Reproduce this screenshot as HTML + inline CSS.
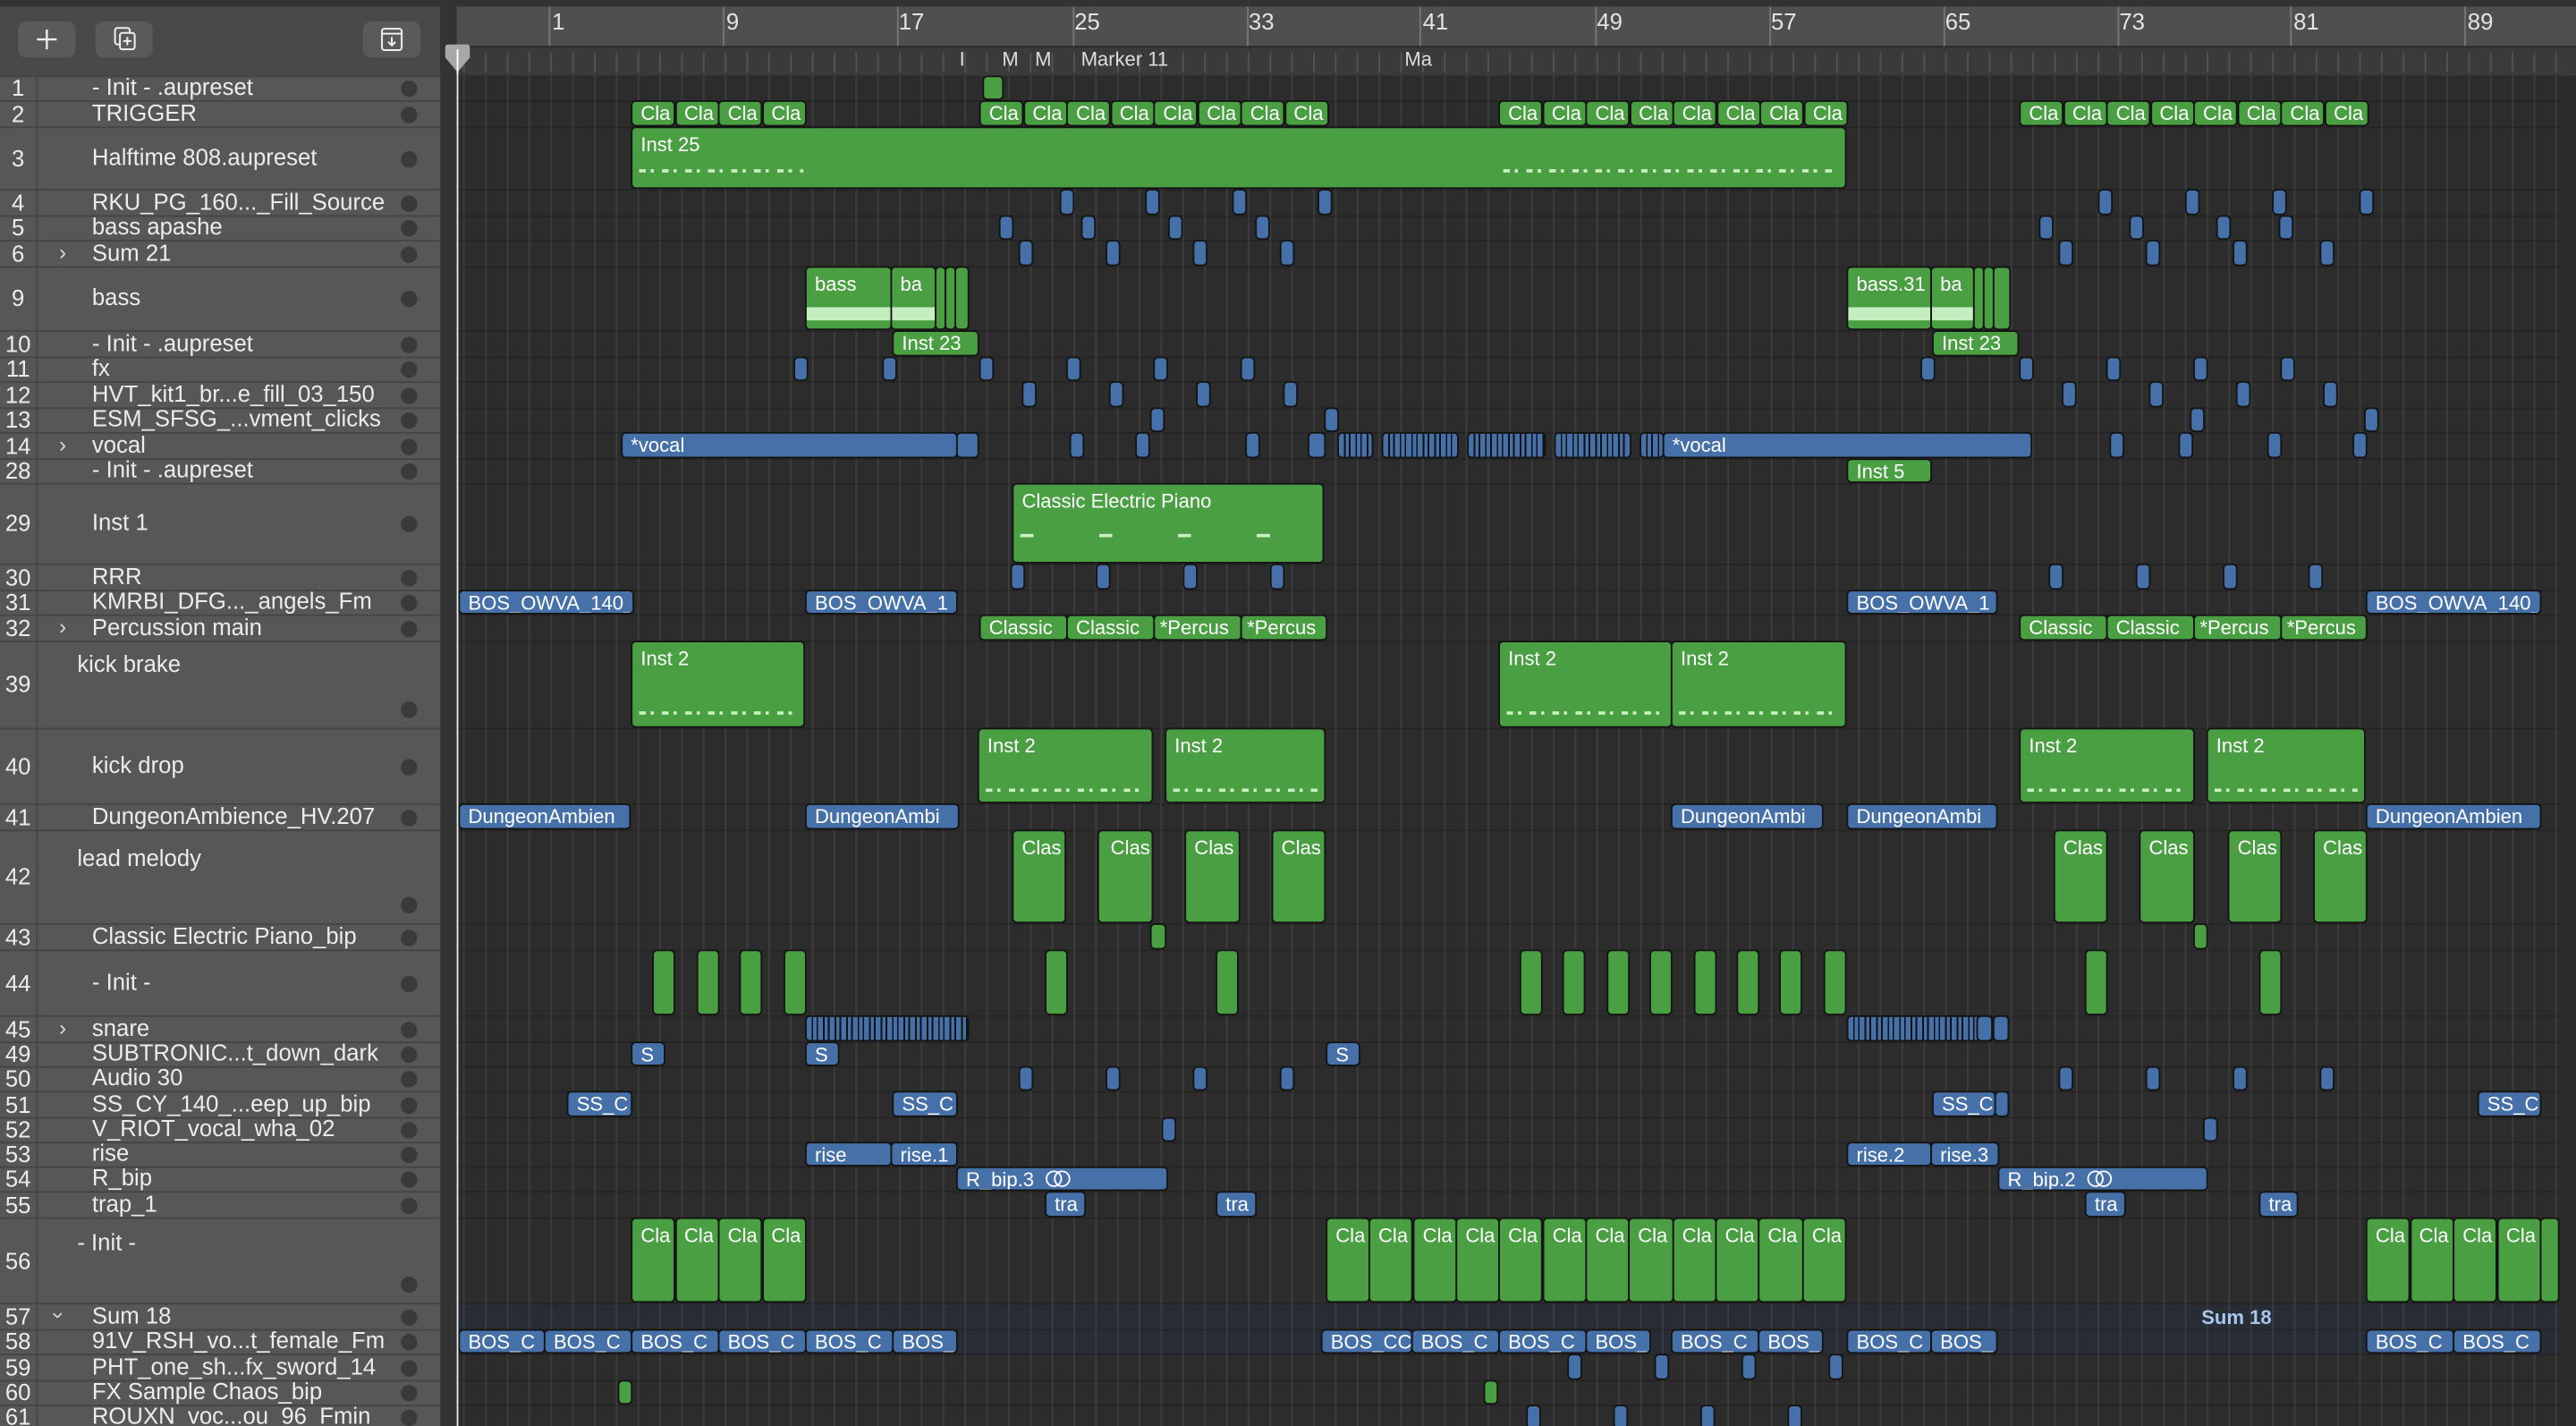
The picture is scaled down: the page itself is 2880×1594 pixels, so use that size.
<!DOCTYPE html>
<html><head><meta charset="utf-8"><style>
html,body{margin:0;padding:0;background:#2c2c2c;overflow:hidden}
#s{position:relative;width:1568px;height:868px;transform:scale(1.83673,1.83641);transform-origin:0 0;overflow:hidden;font-family:"Liberation Sans",sans-serif;background:#2c2c2c}
.a{position:absolute}
#lp{position:absolute;left:0;top:46px;width:268px;height:822px;background:#454545}
.lr{position:absolute;left:0;width:268px;background:#575757;border-top:1px solid #454545;box-sizing:border-box;color:#ececec;font-size:14px}
.lr .n{position:absolute;left:0;width:22px;text-align:center;top:50%;transform:translateY(-55%);font-size:14px;line-height:1}
.lr .t{position:absolute;left:56px;top:50%;transform:translateY(-60%);white-space:nowrap;line-height:1;z-index:3}
.lr .t2{position:absolute;left:47px;top:5px;white-space:nowrap}
.lr .d{position:absolute;left:244px;top:50%;margin-top:-5px;width:10px;height:10px;border-radius:50%;background:#3a3a3a}
.lr .d2{position:absolute;left:244px;bottom:6px;width:10px;height:10px;border-radius:50%;background:#3a3a3a}
.lr .c{position:absolute;left:36px;top:50%;transform:translateY(-62%);font-size:13px;color:#ddd;line-height:1}
#nsep{position:absolute;left:22px;top:46px;width:1px;height:822px;background:#454545}
.tr{position:absolute;left:278px;width:1280px;border-top:1px solid #242424;box-sizing:border-box}
#grid{position:absolute;left:278px;top:46px;width:1280px;height:822px;background-image:linear-gradient(90deg,rgba(255,255,255,.075) 0,rgba(255,255,255,.075) 1px,transparent 1px);background-size:13.27px 100%;background-position:3.9px 0}
.x{position:absolute;box-sizing:border-box;border:1px solid #141414;border-radius:3px;color:#fff;font-size:12px;line-height:14px;padding-left:5px;white-space:nowrap;overflow:hidden}
.g{background:#4a9f43}.b{background:#4670a8}
.st{background:repeating-linear-gradient(90deg,#4670a8 0 3px,#111 3px 4px,#4670a8 4px 6px,#111 6px 7px)}
.w{position:absolute;left:4px;right:4px;height:2px;background:repeating-linear-gradient(90deg,#c9efc2 0 4px,transparent 4px 7px,#c9efc2 7px 9px,transparent 9px 14px)}
.r1{top:46px;height:15px}.r2{top:61px;height:16px}.r3{top:77px;height:38px}.r4{top:115px;height:16px}.r5{top:131px;height:15px}.r6{top:146px;height:16px}.r9{top:162px;height:39px}.r10{top:201px;height:16px}.r11{top:217px;height:15px}.r12{top:232px;height:16px}.r13{top:248px;height:15px}.r14{top:263px;height:16px}.r28{top:279px;height:15px}.r29{top:294px;height:49px}.r30{top:343px;height:16px}.r31{top:359px;height:15px}.r32{top:374px;height:16px}.r39{top:390px;height:53px}.r40{top:443px;height:46px}.r41{top:489px;height:16px}.r42{top:505px;height:57px}.r43{top:562px;height:16px}.r44{top:578px;height:40px}.r45{top:618px;height:16px}.r49{top:634px;height:15px}.r50{top:649px;height:15px}.r51{top:664px;height:16px}.r52{top:680px;height:15px}.r53{top:695px;height:15px}.r54{top:710px;height:15px}.r55{top:725px;height:16px}.r56{top:741px;height:52px}.r57{top:793px;height:16px}.r58{top:809px;height:15px}.r59{top:824px;height:16px}.r60{top:840px;height:15px}.r61{top:855px;height:15px}
.s8{width:9px}.s14{width:14px}
.rn{position:absolute;top:5px;color:#e4e4e4;font-size:14px}
.rt{position:absolute;top:4px;width:1px;height:24px;background:#777}
.mk{position:absolute;top:29px;color:#ddd;font-size:12px}
.btn{position:absolute;top:13px;width:35px;height:22px;background:#5a5a5a;border-radius:5px}
</style></head><body><div id="s">
<div class="a" style="left:0;top:0;width:1568px;height:4px;background:#333"></div>
<div class="a" style="left:0;top:4px;width:268px;height:42px;background:#494949"></div>
<div class="a" style="left:268px;top:0;width:10px;height:868px;background:#333"></div>
<div class="btn" style="left:11px"><svg width="35" height="22" viewBox="0 0 35 22"><path d="M17.5 5v12M11.5 11h12" stroke="#eee" stroke-width="1.3"/></svg></div>
<div class="btn" style="left:58px"><svg width="35" height="22" viewBox="0 0 35 22"><rect x="12" y="4" width="9" height="10" rx="1.5" fill="none" stroke="#eee" stroke-width="1.1"/><rect x="15" y="7" width="9" height="10" rx="1.5" fill="#5a5a5a" stroke="#eee" stroke-width="1.1"/><path d="M19.5 9.5v5M17 12h5" stroke="#eee" stroke-width="1.1"/></svg></div>
<div class="btn" style="left:221px"><svg width="35" height="22" viewBox="0 0 35 22"><rect x="11.5" y="4.5" width="12" height="13" rx="1.5" fill="none" stroke="#eee" stroke-width="1.1"/><path d="M11.5 7.5h12M17.5 9.5v5M15.3 12.5l2.2 2.2 2.2-2.2" fill="none" stroke="#eee" stroke-width="1.1"/></svg></div>
<div class="a" style="left:278px;top:4px;width:1290px;height:24px;background:#4f4f4f"></div>
<div class="a" style="left:278px;top:28px;width:1290px;height:18px;background:#3a3a3a;border-top:1px solid #2a2a2a;box-sizing:border-box;background-image:linear-gradient(90deg,rgba(255,255,255,.12) 0,rgba(255,255,255,.12) 1px,transparent 1px);background-size:13.27px 12px;background-position:3.9px 3px;background-repeat:repeat-x"></div>
<div class="rt" style="left:334px"></div><div class="rn" style="left:336px">1</div>
<div class="rt" style="left:440px"></div><div class="rn" style="left:442px">9</div>
<div class="rt" style="left:546px"></div><div class="rn" style="left:547px">17</div>
<div class="rt" style="left:653px"></div><div class="rn" style="left:654px">25</div>
<div class="rt" style="left:759px"></div><div class="rn" style="left:760px">33</div>
<div class="rt" style="left:864px"></div><div class="rn" style="left:866px">41</div>
<div class="rt" style="left:971px"></div><div class="rn" style="left:972px">49</div>
<div class="rt" style="left:1077px"></div><div class="rn" style="left:1078px">57</div>
<div class="rt" style="left:1183px"></div><div class="rn" style="left:1184px">65</div>
<div class="rt" style="left:1289px"></div><div class="rn" style="left:1290px">73</div>
<div class="rt" style="left:1394px"></div><div class="rn" style="left:1396px">81</div>
<div class="rt" style="left:1500px"></div><div class="rn" style="left:1502px">89</div>
<div class="mk" style="left:584px">I</div><div class="mk" style="left:610px">M</div><div class="mk" style="left:630px">M</div><div class="mk" style="left:658px">Marker 11</div><div class="mk" style="left:855px">Ma</div>
<div id="lp"></div>
<div class="lr r1"><span class="n">1</span><span class="t">- Init - .aupreset</span><i class="d"></i></div>
<div class="lr r2"><span class="n">2</span><span class="t">TRIGGER</span><i class="d"></i></div>
<div class="lr r3"><span class="n">3</span><span class="t">Halftime 808.aupreset</span><i class="d"></i></div>
<div class="lr r4"><span class="n">4</span><span class="t">RKU_PG_160..._Fill_Source</span><i class="d"></i></div>
<div class="lr r5"><span class="n">5</span><span class="t">bass apashe</span><i class="d"></i></div>
<div class="lr r6"><span class="n">6</span><span class="c">&#x203A;</span><span class="t">Sum 21</span><i class="d"></i></div>
<div class="lr r9"><span class="n">9</span><span class="t">bass</span><i class="d"></i></div>
<div class="lr r10"><span class="n">10</span><span class="t">- Init - .aupreset</span><i class="d"></i></div>
<div class="lr r11"><span class="n">11</span><span class="t">fx</span><i class="d"></i></div>
<div class="lr r12"><span class="n">12</span><span class="t">HVT_kit1_br...e_fill_03_150</span><i class="d"></i></div>
<div class="lr r13"><span class="n">13</span><span class="t">ESM_SFSG_...vment_clicks</span><i class="d"></i></div>
<div class="lr r14"><span class="n">14</span><span class="c">&#x203A;</span><span class="t">vocal</span><i class="d"></i></div>
<div class="lr r28"><span class="n">28</span><span class="t">- Init - .aupreset</span><i class="d"></i></div>
<div class="lr r29"><span class="n">29</span><span class="t">Inst 1</span><i class="d"></i></div>
<div class="lr r30"><span class="n">30</span><span class="t">RRR</span><i class="d"></i></div>
<div class="lr r31"><span class="n">31</span><span class="t">KMRBI_DFG..._angels_Fm</span><i class="d"></i></div>
<div class="lr r32"><span class="n">32</span><span class="c">&#x203A;</span><span class="t">Percussion main</span><i class="d"></i></div>
<div class="lr r39"><span class="n">39</span><span class="t2">kick brake</span><i class="d2"></i></div>
<div class="lr r40"><span class="n">40</span><span class="t">kick drop</span><i class="d"></i></div>
<div class="lr r41"><span class="n">41</span><span class="t">DungeonAmbience_HV.207</span><i class="d"></i></div>
<div class="lr r42"><span class="n">42</span><span class="t2" style="top:8px">lead melody</span><i class="d2"></i></div>
<div class="lr r43"><span class="n">43</span><span class="t">Classic Electric Piano_bip</span><i class="d"></i></div>
<div class="lr r44"><span class="n">44</span><span class="t">- Init -</span><i class="d"></i></div>
<div class="lr r45"><span class="n">45</span><span class="c">&#x203A;</span><span class="t">snare</span><i class="d"></i></div>
<div class="lr r49"><span class="n">49</span><span class="t">SUBTRONIC...t_down_dark</span><i class="d"></i></div>
<div class="lr r50"><span class="n">50</span><span class="t">Audio 30</span><i class="d"></i></div>
<div class="lr r51"><span class="n">51</span><span class="t">SS_CY_140_...eep_up_bip</span><i class="d"></i></div>
<div class="lr r52"><span class="n">52</span><span class="t">V_RIOT_vocal_wha_02</span><i class="d"></i></div>
<div class="lr r53"><span class="n">53</span><span class="t">rise</span><i class="d"></i></div>
<div class="lr r54"><span class="n">54</span><span class="t">R_bip</span><i class="d"></i></div>
<div class="lr r55"><span class="n">55</span><span class="t">trap_1</span><i class="d"></i></div>
<div class="lr r56"><span class="n">56</span><span class="t2" style="top:6px">- Init -</span><i class="d2"></i></div>
<div class="lr r57"><span class="n">57</span><span class="c" style="left:34px;transform:translateY(-60%) rotate(90deg)">&#x203A;</span><span class="t">Sum 18</span><i class="d"></i></div>
<div class="lr r58"><span class="n">58</span><span class="t">91V_RSH_vo...t_female_Fm</span><i class="d"></i></div>
<div class="lr r59"><span class="n">59</span><span class="t">PHT_one_sh...fx_sword_14</span><i class="d"></i></div>
<div class="lr r60"><span class="n">60</span><span class="t">FX Sample Chaos_bip</span><i class="d"></i></div>
<div class="lr r61"><span class="n">61</span><span class="t">ROUXN_voc...ou_96_Fmin</span><i class="d"></i></div>
<div id="nsep"></div>
<div class="tr r2"></div><div class="tr r3"></div><div class="tr r4"></div><div class="tr r5"></div><div class="tr r6"></div><div class="tr r9"></div><div class="tr r10"></div><div class="tr r11"></div><div class="tr r12"></div><div class="tr r13"></div><div class="tr r14"></div><div class="tr r28"></div><div class="tr r29"></div><div class="tr r30"></div><div class="tr r31"></div><div class="tr r32"></div><div class="tr r39"></div><div class="tr r40"></div><div class="tr r41"></div><div class="tr r42"></div><div class="tr r43"></div><div class="tr r44"></div><div class="tr r45"></div><div class="tr r49"></div><div class="tr r50"></div><div class="tr r51"></div><div class="tr r52"></div><div class="tr r53"></div><div class="tr r54"></div><div class="tr r55"></div><div class="tr r56"></div>
<div class="tr r57" style="background:#272c35"></div><div class="tr r58" style="background:#272c35"></div><div class="tr r59"></div><div class="tr r60"></div><div class="tr r61"></div>
<div id="grid"></div>
<div class="a" style="left:1558px;top:46px;width:10px;height:822px;background:#2a2a2a"></div>
<div class="a" style="left:1340px;top:795px;color:#a9c6ee;font-size:12px;font-weight:bold">Sum 18</div>
<div class="x g r1" style="left:598px;width:13px"></div>
<div class="x g r2" style="left:384px;width:27px">Cla</div><div class="x g r2" style="left:410.5px;width:27px">Cla</div><div class="x g r2" style="left:437px;width:27px">Cla</div><div class="x g r2" style="left:463.5px;width:27px">Cla</div>
<div class="x g r2" style="left:596px;width:27px">Cla</div><div class="x g r2" style="left:622.5px;width:27px">Cla</div><div class="x g r2" style="left:649px;width:27px">Cla</div><div class="x g r2" style="left:675.5px;width:27px">Cla</div><div class="x g r2" style="left:702px;width:27px">Cla</div><div class="x g r2" style="left:728.5px;width:27px">Cla</div><div class="x g r2" style="left:755px;width:27px">Cla</div><div class="x g r2" style="left:781.5px;width:27px">Cla</div>
<div class="x g r2" style="left:912px;width:27px">Cla</div><div class="x g r2" style="left:938.5px;width:27px">Cla</div><div class="x g r2" style="left:965px;width:27px">Cla</div><div class="x g r2" style="left:991.5px;width:27px">Cla</div><div class="x g r2" style="left:1018px;width:27px">Cla</div><div class="x g r2" style="left:1044.5px;width:27px">Cla</div><div class="x g r2" style="left:1071px;width:27px">Cla</div><div class="x g r2" style="left:1097.5px;width:27px">Cla</div>
<div class="x g r2" style="left:1229px;width:27px">Cla</div><div class="x g r2" style="left:1255.5px;width:27px">Cla</div><div class="x g r2" style="left:1282px;width:27px">Cla</div><div class="x g r2" style="left:1308.5px;width:27px">Cla</div><div class="x g r2" style="left:1335px;width:27px">Cla</div><div class="x g r2" style="left:1361.5px;width:27px">Cla</div><div class="x g r2" style="left:1388px;width:27px">Cla</div><div class="x g r2" style="left:1414.5px;width:27px">Cla</div>
<div class="x g r3" style="left:384px;width:740px;padding-top:3px">Inst 25<div class="w" style="top:25px;width:100px"></div><div class="w" style="top:25px;left:530px;width:200px"></div></div>
<div class="x b r4 s8" style="left:645px"></div><div class="x b r4 s8" style="left:697px"></div><div class="x b r4 s8" style="left:750px"></div><div class="x b r4 s8" style="left:802px"></div><div class="x b r4 s8" style="left:1277px"></div><div class="x b r4 s8" style="left:1330px"></div><div class="x b r4 s8" style="left:1383px"></div><div class="x b r4 s8" style="left:1436px"></div>
<div class="x b r5 s8" style="left:608px"></div><div class="x b r5 s8" style="left:658px"></div><div class="x b r5 s8" style="left:711px"></div><div class="x b r5 s8" style="left:764px"></div><div class="x b r5 s8" style="left:1241px"></div><div class="x b r5 s8" style="left:1296px"></div><div class="x b r5 s8" style="left:1349px"></div><div class="x b r5 s8" style="left:1387px"></div>
<div class="x b r6 s8" style="left:620px"></div><div class="x b r6 s8" style="left:673px"></div><div class="x b r6 s8" style="left:726px"></div><div class="x b r6 s8" style="left:779px"></div><div class="x b r6 s8" style="left:1253px"></div><div class="x b r6 s8" style="left:1306px"></div><div class="x b r6 s8" style="left:1359px"></div><div class="x b r6 s8" style="left:1412px"></div>
<div class="x g r9" style="left:490px;width:53px;padding-top:3px">bass<div class="w" style="top:24px;left:0;right:0;height:8px;background:#c4eec0"></div></div>
<div class="x g r9" style="left:542px;width:28px;padding-top:3px">ba<div class="w" style="top:24px;left:0;right:0;height:8px;background:#c4eec0"></div></div>
<div class="x g r9" style="left:569px;width:7px"></div><div class="x g r9" style="left:575px;width:7px"></div><div class="x g r9" style="left:581px;width:9px"></div>
<div class="x g r9" style="left:1124px;width:52px;padding-top:3px">bass.31<div class="w" style="top:24px;left:0;right:0;height:8px;background:#c4eec0"></div></div>
<div class="x g r9" style="left:1175px;width:27px;padding-top:3px">ba<div class="w" style="top:24px;left:0;right:0;height:8px;background:#c4eec0"></div></div>
<div class="x g r9" style="left:1201px;width:7px"></div><div class="x g r9" style="left:1207px;width:7px"></div><div class="x g r9" style="left:1213px;width:11px"></div>
<div class="x g r10" style="left:543px;width:53px">Inst 23</div><div class="x g r10" style="left:1176px;width:53px">Inst 23</div>
<div class="x b r11 s8" style="left:483px"></div><div class="x b r11 s8" style="left:537px"></div><div class="x b r11 s8" style="left:596px"></div><div class="x b r11 s8" style="left:649px"></div><div class="x b r11 s8" style="left:702px"></div><div class="x b r11 s8" style="left:755px"></div><div class="x b r11 s8" style="left:1169px"></div><div class="x b r11 s8" style="left:1229px"></div><div class="x b r11 s8" style="left:1282px"></div><div class="x b r11 s8" style="left:1335px"></div><div class="x b r11 s8" style="left:1388px"></div>
<div class="x b r12 s8" style="left:622px"></div><div class="x b r12 s8" style="left:675px"></div><div class="x b r12 s8" style="left:728px"></div><div class="x b r12 s8" style="left:781px"></div><div class="x b r12 s8" style="left:1255px"></div><div class="x b r12 s8" style="left:1308px"></div><div class="x b r12 s8" style="left:1361px"></div><div class="x b r12 s8" style="left:1414px"></div>
<div class="x b r13 s8" style="left:700px"></div><div class="x b r13 s8" style="left:806px"></div><div class="x b r13 s8" style="left:1333px"></div><div class="x b r13 s8" style="left:1439px"></div>
<div class="x b r14" style="left:378px;width:205px">*vocal</div><div class="x b r14" style="left:582px;width:14px"></div>
<div class="x b r14 s8" style="left:651px"></div><div class="x b r14 s8" style="left:691px"></div><div class="x b r14 s8" style="left:758px"></div>
<div class="x b r14" style="left:796px;width:11px"></div>
<div class="x st r14" style="left:814px;width:22px"></div><div class="x st r14" style="left:841px;width:47px"></div><div class="x st r14" style="left:893px;width:48px"></div><div class="x st r14" style="left:946px;width:47px"></div><div class="x st r14" style="left:998px;width:15px"></div>
<div class="x b r14" style="left:1012px;width:225px">*vocal</div>
<div class="x b r14 s8" style="left:1284px"></div><div class="x b r14 s8" style="left:1326px"></div><div class="x b r14 s8" style="left:1380px"></div><div class="x b r14 s8" style="left:1432px"></div>
<div class="x g r28" style="left:1124px;width:52px">Inst 5</div>
<div class="x g r29" style="left:616px;width:190px;padding-top:3px">Classic Electric Piano<div class="w" style="top:30px;width:176px;background:repeating-linear-gradient(90deg,#c9efc2 0 8px,transparent 8px 48px)"></div></div>
<div class="x b r30 s8" style="left:615px"></div><div class="x b r30 s8" style="left:667px"></div><div class="x b r30 s8" style="left:720px"></div><div class="x b r30 s8" style="left:773px"></div><div class="x b r30 s8" style="left:1247px"></div><div class="x b r30 s8" style="left:1300px"></div><div class="x b r30 s8" style="left:1353px"></div><div class="x b r30 s8" style="left:1405px"></div>
<div class="x b r31" style="left:279px;width:107px">BOS_OWVA_140_</div><div class="x b r31" style="left:490px;width:93px">BOS_OWVA_1</div><div class="x b r31" style="left:1124px;width:92px">BOS_OWVA_1</div><div class="x b r31" style="left:1440px;width:107px">BOS_OWVA_140_</div>
<div class="x g r32" style="left:596px;width:54px">Classic</div><div class="x g r32" style="left:649px;width:54px">Classic</div><div class="x g r32" style="left:702px;width:54px;padding-left:3px">*Percus</div><div class="x g r32" style="left:755px;width:53px;padding-left:3px">*Percus</div>
<div class="x g r32" style="left:1229px;width:54px">Classic</div><div class="x g r32" style="left:1282px;width:54px">Classic</div><div class="x g r32" style="left:1335px;width:54px;padding-left:3px">*Percus</div><div class="x g r32" style="left:1388px;width:53px;padding-left:3px">*Percus</div>
<div class="x g r39" style="left:384px;width:106px;padding-top:3px">Inst 2<div class="w" style="top:42px"></div></div>
<div class="x g r39" style="left:912px;width:106px;padding-top:3px">Inst 2<div class="w" style="top:42px"></div></div>
<div class="x g r39" style="left:1017px;width:107px;padding-top:3px">Inst 2<div class="w" style="top:42px"></div></div>
<div class="x g r40" style="left:595px;width:107px;padding-top:3px">Inst 2<div class="w" style="top:36px"></div></div>
<div class="x g r40" style="left:709px;width:98px;padding-top:3px">Inst 2<div class="w" style="top:36px"></div></div>
<div class="x g r40" style="left:1229px;width:107px;padding-top:3px">Inst 2<div class="w" style="top:36px"></div></div>
<div class="x g r40" style="left:1343px;width:97px;padding-top:3px">Inst 2<div class="w" style="top:36px"></div></div>
<div class="x b r41" style="left:279px;width:105px">DungeonAmbien</div><div class="x b r41" style="left:490px;width:94px">DungeonAmbi</div><div class="x b r41" style="left:1017px;width:93px">DungeonAmbi</div><div class="x b r41" style="left:1124px;width:92px">DungeonAmbi</div><div class="x b r41" style="left:1440px;width:107px">DungeonAmbien</div>
<div class="x g r42" style="left:616px;width:33px;padding-top:3px">Clas</div><div class="x g r42" style="left:668px;width:34px;padding-top:3px;padding-left:7px">Clas</div><div class="x g r42" style="left:721px;width:34px;padding-top:3px">Clas</div><div class="x g r42" style="left:774px;width:33px;padding-top:3px">Clas</div>
<div class="x g r42" style="left:1250px;width:33px;padding-top:3px">Clas</div><div class="x g r42" style="left:1302px;width:34px;padding-top:3px">Clas</div><div class="x g r42" style="left:1356px;width:33px;padding-top:3px">Clas</div><div class="x g r42" style="left:1408px;width:33px;padding-top:3px">Clas</div>
<div class="x g r43" style="left:700px;width:10px"></div><div class="x g r43" style="left:1335px;width:9px"></div>
<div class="x g r44 s14" style="left:397px"></div><div class="x g r44 s14" style="left:424px"></div><div class="x g r44 s14" style="left:450px"></div><div class="x g r44 s14" style="left:477px"></div><div class="x g r44 s14" style="left:636px"></div><div class="x g r44 s14" style="left:740px"></div>
<div class="x g r44 s14" style="left:925px"></div><div class="x g r44 s14" style="left:951px"></div><div class="x g r44 s14" style="left:978px"></div><div class="x g r44 s14" style="left:1004px"></div><div class="x g r44 s14" style="left:1031px"></div><div class="x g r44 s14" style="left:1057px"></div><div class="x g r44 s14" style="left:1083px"></div><div class="x g r44 s14" style="left:1110px"></div><div class="x g r44 s14" style="left:1269px"></div><div class="x g r44 s14" style="left:1375px"></div>
<div class="x st r45" style="left:490px;width:100px"></div><div class="x st r45" style="left:1124px;width:90px"></div><div class="x b r45" style="left:1203px;width:10px"></div><div class="x b r45" style="left:1213px;width:10px"></div>
<div class="x b r49" style="left:384px;width:21px">S</div><div class="x b r49" style="left:490px;width:21px">S</div><div class="x b r49" style="left:807px;width:21px">S</div>
<div class="x b r50 s8" style="left:620px"></div><div class="x b r50 s8" style="left:673px"></div><div class="x b r50 s8" style="left:726px"></div><div class="x b r50 s8" style="left:779px"></div><div class="x b r50 s8" style="left:1253px"></div><div class="x b r50 s8" style="left:1306px"></div><div class="x b r50 s8" style="left:1359px"></div><div class="x b r50 s8" style="left:1412px"></div>
<div class="x b r51" style="left:345px;width:40px">SS_C</div><div class="x b r51" style="left:543px;width:40px">SS_C</div><div class="x b r51" style="left:1176px;width:39px">SS_C</div><div class="x b r51" style="left:1214px;width:9px"></div><div class="x b r51" style="left:1508px;width:39px">SS_C</div>
<div class="x b r52 s8" style="left:707px"></div><div class="x b r52 s8" style="left:1341px"></div>
<div class="x b r53" style="left:490px;width:53px">rise</div><div class="x b r53" style="left:542px;width:41px">rise.1</div><div class="x b r53" style="left:1124px;width:52px">rise.2</div><div class="x b r53" style="left:1175px;width:42px">rise.3</div>
<div class="x b r54" style="left:582px;width:129px">R_bip.3 &nbsp;<svg width="16" height="11" viewBox="0 0 16 11" style="vertical-align:-1px"><circle cx="5.5" cy="5.5" r="4.5" fill="none" stroke="#fff" stroke-width="1"/><circle cx="10.5" cy="5.5" r="4.5" fill="none" stroke="#fff" stroke-width="1"/></svg></div>
<div class="x b r54" style="left:1216px;width:128px">R_bip.2 &nbsp;<svg width="16" height="11" viewBox="0 0 16 11" style="vertical-align:-1px"><circle cx="5.5" cy="5.5" r="4.5" fill="none" stroke="#fff" stroke-width="1"/><circle cx="10.5" cy="5.5" r="4.5" fill="none" stroke="#fff" stroke-width="1"/></svg></div>
<div class="x b r55" style="left:636px;width:25px">tra</div><div class="x b r55" style="left:740px;width:25px">tra</div><div class="x b r55" style="left:1269px;width:25px">tra</div><div class="x b r55" style="left:1375px;width:24px">tra</div>
<div class="x g r56" style="left:384px;width:27px;padding-top:3px">Cla</div><div class="x g r56" style="left:410.5px;width:27px;padding-top:3px">Cla</div><div class="x g r56" style="left:437px;width:27px;padding-top:3px">Cla</div><div class="x g r56" style="left:463.5px;width:27px;padding-top:3px">Cla</div>
<div class="x g r56" style="left:807px;width:27px;padding-top:3px">Cla</div><div class="x g r56" style="left:833px;width:27px;padding-top:3px">Cla</div><div class="x g r56" style="left:860px;width:27px;padding-top:3px">Cla</div><div class="x g r56" style="left:886px;width:27px;padding-top:3px">Cla</div><div class="x g r56" style="left:912px;width:27px;padding-top:3px">Cla</div><div class="x g r56" style="left:939px;width:27px;padding-top:3px">Cla</div><div class="x g r56" style="left:965px;width:27px;padding-top:3px">Cla</div><div class="x g r56" style="left:991px;width:28px;padding-top:3px">Cla</div><div class="x g r56" style="left:1018px;width:27px;padding-top:3px">Cla</div><div class="x g r56" style="left:1044px;width:27px;padding-top:3px">Cla</div><div class="x g r56" style="left:1070px;width:28px;padding-top:3px">Cla</div><div class="x g r56" style="left:1097px;width:27px;padding-top:3px">Cla</div>
<div class="x g r56" style="left:1440px;width:27px;padding-top:3px">Cla</div><div class="x g r56" style="left:1466.5px;width:27px;padding-top:3px">Cla</div><div class="x g r56" style="left:1493px;width:27px;padding-top:3px">Cla</div><div class="x g r56" style="left:1519.5px;width:27px;padding-top:3px">Cla</div><div class="x g r56" style="left:1546px;width:12px"></div>
<div class="x b r58" style="left:279px;width:53px">BOS_C</div><div class="x b r58" style="left:331px;width:54px">BOS_C</div><div class="x b r58" style="left:384px;width:54px">BOS_C</div><div class="x b r58" style="left:437px;width:54px">BOS_C</div><div class="x b r58" style="left:490px;width:54px">BOS_C</div><div class="x b r58" style="left:543px;width:40px">BOS_</div>
<div class="x b r58" style="left:804px;width:56px">BOS_CC</div><div class="x b r58" style="left:859px;width:54px">BOS_C</div><div class="x b r58" style="left:912px;width:54px">BOS_C</div><div class="x b r58" style="left:965px;width:40px">BOS_</div><div class="x b r58" style="left:1017px;width:54px">BOS_C</div><div class="x b r58" style="left:1070px;width:40px">BOS_</div><div class="x b r58" style="left:1124px;width:52px">BOS_C</div><div class="x b r58" style="left:1175px;width:41px">BOS_</div>
<div class="x b r58" style="left:1440px;width:54px">BOS_C</div><div class="x b r58" style="left:1493px;width:54px">BOS_C</div>
<div class="x b r59 s8" style="left:954px"></div><div class="x b r59 s8" style="left:1007px"></div><div class="x b r59 s8" style="left:1060px"></div><div class="x b r59 s8" style="left:1113px"></div>
<div class="x g r60" style="left:376px;width:9px"></div><div class="x g r60" style="left:903px;width:9px"></div>
<div class="x b r61 s8" style="left:929px"></div><div class="x b r61 s8" style="left:982px"></div><div class="x b r61 s8" style="left:1035px"></div><div class="x b r61 s8" style="left:1088px"></div>
<div class="a" style="left:278px;top:28px;width:1px;height:840px;background:#e8e8e8"></div>
<svg class="a" style="left:270px;top:27px" width="17" height="18" viewBox="0 0 17 18"><path d="M1 2Q1 0 3 0H14Q16 0 16 2V8L8.5 17L1 8Z" fill="#a8a8a8"/><path d="M8.5 3V18" stroke="#fff" stroke-width="1"/></svg>
</div></body></html>
